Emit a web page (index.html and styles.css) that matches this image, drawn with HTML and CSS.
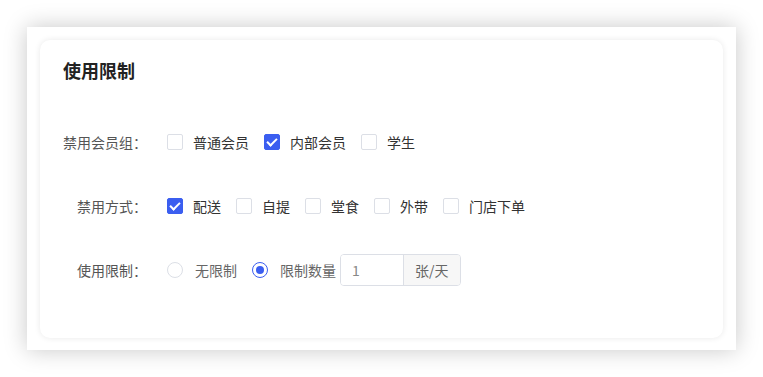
FILE: index.html
```html
<!DOCTYPE html>
<html>
<head>
    <meta charset="UTF-8">
    <meta name="viewport" content="width=device-width, initial-scale=1.0">
    <title>使用限制</title>
    <link rel="stylesheet" href="styles.css">
</head>
<body>
<div class="panel">
    <div class="card">
        <h3 class="titolo">使用限制</h3>

        <div class="riga">
            <div class="etichetta">禁用会员组：</div>
            <div class="opzioni">
                <label class="voce"><span class="casella"></span>普通会员</label>
                <label class="voce"><span class="casella attiva"></span>内部会员</label>
                <label class="voce"><span class="casella"></span>学生</label>
            </div>
        </div>

        <div class="riga">
            <div class="etichetta">禁用方式：</div>
            <div class="opzioni">
                <label class="voce"><span class="casella attiva"></span>配送</label>
                <label class="voce"><span class="casella"></span>自提</label>
                <label class="voce"><span class="casella"></span>堂食</label>
                <label class="voce"><span class="casella"></span>外带</label>
                <label class="voce"><span class="casella"></span>门店下单</label>
            </div>
        </div>

        <div class="riga">
            <div class="etichetta">使用限制：</div>
            <div class="opzioni">
                <label class="voce grigio"><span class="radio"></span>无限制</label>
                <label class="voce grigio stretto"><span class="radio attiva"></span>限制数量</label>
                <div class="gruppo">
                    <input type="text" value="1" class="numero">
                    <span class="unita">张/天</span>
                </div>
            </div>
        </div>
    </div>
</div>
</body>
</html>
```

FILE: styles.css
```css
body {
    margin: 0;
    padding: 27px;
    background-color: #fff;
    font-family: "Noto Sans CJK SC", "Noto Sans", sans-serif;
    font-size: 14px;
    color: #333;
}

.panel {
    width: 709px;
    height: 323px;
    box-sizing: border-box;
    padding: 13px;
    background-color: #fff;
    box-shadow: 0 0 22px rgba(0, 0, 0, 0.22);
}

.card {
    height: 298px;
    box-sizing: border-box;
    padding: 18px 23px 0 23px;
    background-color: #fff;
    border-radius: 10px;
    box-shadow: 0 0 6px rgba(0, 0, 0, 0.09);
}

.titolo {
    margin: 0 0 43px 0;
    font-size: 18px;
    line-height: 25px;
    font-weight: bold;
    color: #222;
}

.riga {
    display: flex;
    align-items: center;
    height: 32px;
    margin-bottom: 32px;
}

.etichetta {
    width: 84px;
    text-align: right;
    color: #555;
}

.opzioni {
    display: flex;
    align-items: center;
    margin-left: 20px;
}

.voce {
    display: flex;
    align-items: center;
    margin-right: 15px;
    color: #333;
}

.grigio {
    color: #666;
}

.stretto {
    margin-right: 4px;
}

.casella {
    width: 14px;
    height: 14px;
    margin-right: 10px;
    border: 1px solid #dcdfe6;
    border-radius: 2px;
    position: relative;
}

.casella.attiva {
    background-color: #3b5ef0;
    border-color: #3b5ef0;
}

.casella.attiva::after {
    content: "";
    position: absolute;
    left: 4px;
    top: 1px;
    width: 4px;
    height: 8px;
    border: solid #fff;
    border-width: 0 2px 2px 0;
    transform: rotate(45deg);
}

.radio {
    width: 14px;
    height: 14px;
    margin-right: 12px;
    border: 1px solid #dcdfe6;
    border-radius: 50%;
    position: relative;
}

.radio.attiva {
    border-color: #3b5ef0;
}

.radio.attiva::after {
    content: "";
    position: absolute;
    left: 3px;
    top: 3px;
    width: 8px;
    height: 8px;
    border-radius: 50%;
    background-color: #3b5ef0;
}

.gruppo {
    display: flex;
    height: 32px;
    border: 1px solid #dcdfe6;
    border-radius: 4px;
    box-sizing: border-box;
    overflow: hidden;
}

.numero {
    width: 62px;
    border: none;
    padding: 0 11px;
    box-sizing: border-box;
    font-family: "Noto Sans CJK SC", "Noto Sans", sans-serif;
    font-size: 14px;
    color: #888;
    outline: none;
}

.unita {
    display: flex;
    align-items: center;
    padding: 0 11px;
    border-left: 1px solid #dcdfe6;
    background-color: #f7f7f7;
    color: #666;
}
```
